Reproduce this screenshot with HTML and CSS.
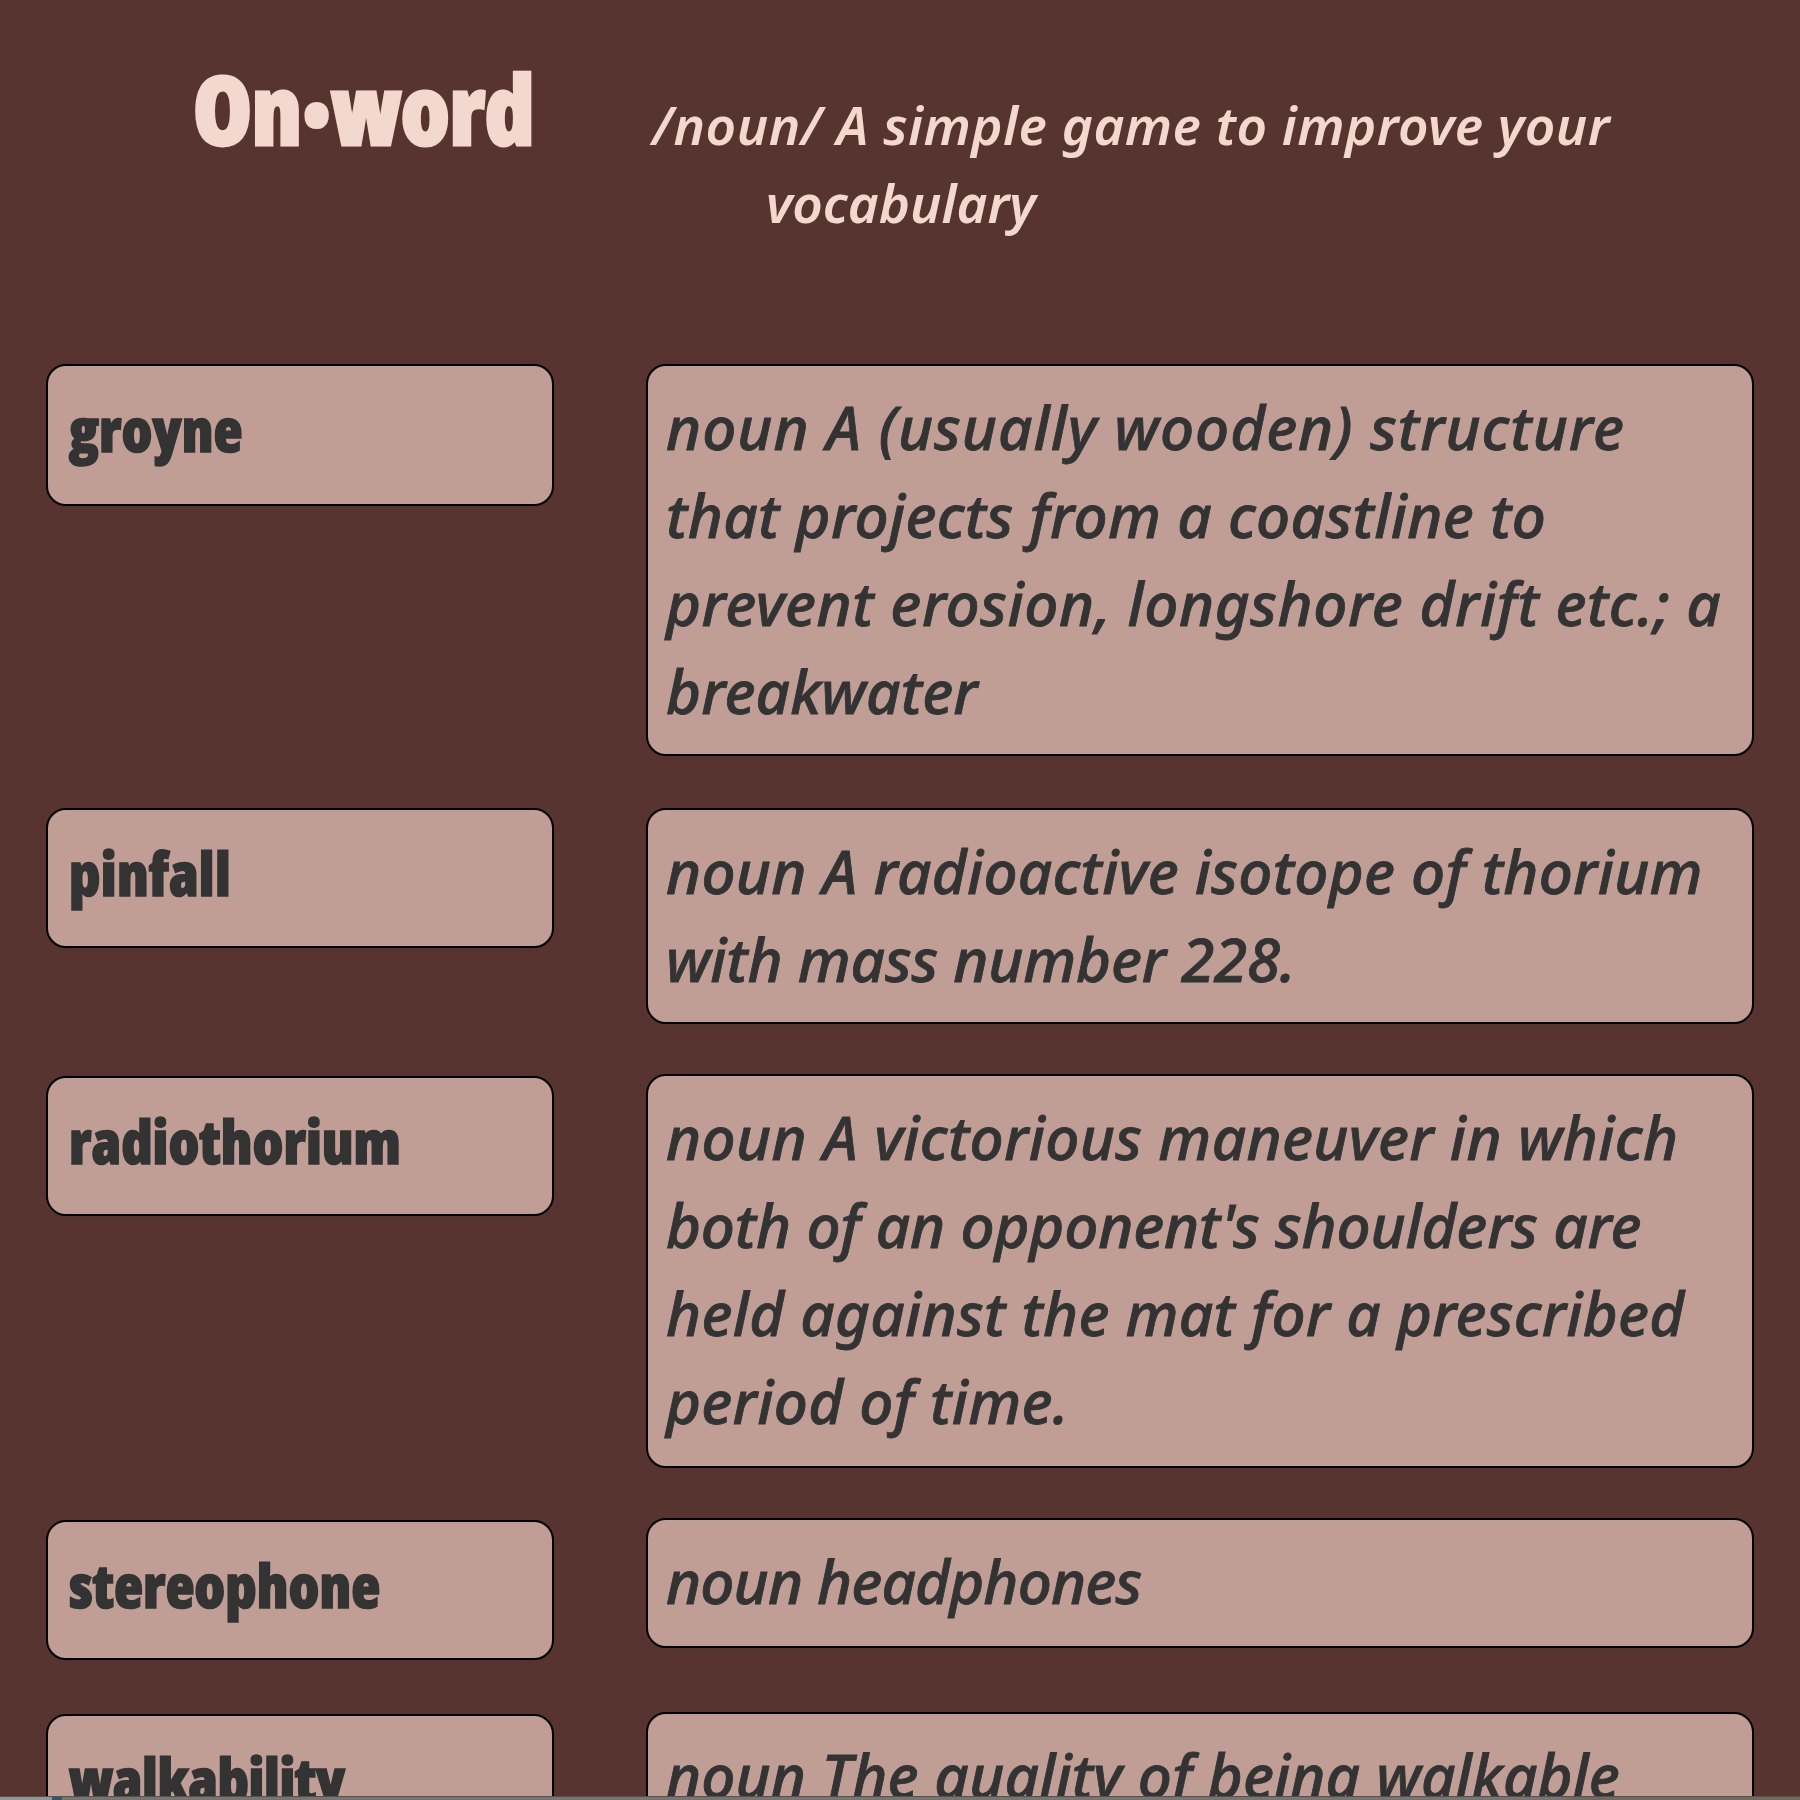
FILE: index.html
```html
<!DOCTYPE html>
<html lang="en">
<head>
<meta charset="utf-8">
<title>On•word</title>
<link rel="stylesheet" href="styles.css">
</head>
<body>
<div class="window">
  <header class="header">
    <h1 class="brand">On<span class="dot">•</span>word</h1>
    <p class="tagline"><span class="line" style="--track:.48px">/noun/ A simple game to improve your</span><span class="line line-end">vocabulary</span></p>
  </header>
  <main class="board">
    <section class="row first">
      <div class="word"><span>groyne</span></div>
      <div class="definition">
        <span class="line" style="--track:1px">noun A (usually wooden) structure</span>
        <span class="line" style="--track:.35px">that projects from a coastline to</span>
        <span class="line" style="--track:.58px">prevent erosion, longshore drift etc.; a</span>
        <span class="line" style="--track:.15px">breakwater</span>
      </div>
    </section>
    <section class="row">
      <div class="word"><span style="--track:.3px">pinfall</span></div>
      <div class="definition">
        <span class="line" style="--track:.27px">noun A radioactive isotope of thorium</span>
        <span class="line" style="--track:-.2px">with mass number 228.</span>
      </div>
    </section>
    <section class="row lowered">
      <div class="word"><span>radiothorium</span></div>
      <div class="definition">
        <span class="line" style="--track:.35px">noun A victorious maneuver in which</span>
        <span class="line" style="--track:-.17px">both of an opponent's shoulders are</span>
        <span class="line" style="--track:.27px">held against the mat for a prescribed</span>
        <span class="line" style="--track:.3px">period of time.</span>
      </div>
    </section>
    <section class="row lowered">
      <div class="word"><span>stereophone</span></div>
      <div class="definition">
        <span class="line" style="--track:-.85px">noun headphones</span>
      </div>
    </section>
    <section class="row lowered">
      <div class="word"><span style="--track:-.4px">walkability</span></div>
      <div class="definition">
        <span class="line" style="--track:.08px">noun The quality of being walkable</span>
      </div>
    </section>
  </main>
</div>
<footer class="edge"></footer>
</body>
</html>
```
FILE: styles.css
```css
* { box-sizing: border-box; }

body {
  margin: 0;
  height: 1800px;
  overflow: hidden;
  display: flex;
  flex-direction: column;
  background: #583431;
  font-family: "Noto Sans", sans-serif;
}

.window {
  flex: none;
  height: 1796px;
  overflow: hidden;
}

.header {
  height: 364px;
  padding: 38px 46px 0 193px;
  display: flex;
  align-items: baseline;
  color: #f3d8cf;
}

.brand {
  flex: none;
  width: 459px;
  margin: 0;
  font: 900 95px/140px "Open Sans", sans-serif;
  font-stretch: 75%;
  letter-spacing: -.3px;
  -webkit-text-stroke: 3px currentColor;
}

.dot {
  font-size: 76px;
  line-height: 1;
  vertical-align: 2px;
  -webkit-text-stroke: 0;
}

.tagline {
  margin: 0;
  font-size: 53px;
  font-style: italic;
  font-weight: 600;
  line-height: 78px;
}

.line {
  display: block;
  white-space: nowrap;
  letter-spacing: var(--track, 0);
}

.line-end { padding-left: 114px; }

.board {
  padding: 0 46px;
}

.row {
  display: flex;
  align-items: flex-start;
  gap: 92px;
  margin-bottom: 50px;
}

.word,
.definition {
  border: 2px solid #000;
  border-radius: 20px;
  background: #c09e95;
  color: #333;
}

.word {
  flex: none;
  width: 508px;
  height: 140px;
  padding: 19px 21px 0;
  font: 900 60px/88px "Open Sans", sans-serif;
  font-stretch: 75%;
  -webkit-text-stroke: 1.5px currentColor;
}

.word span { letter-spacing: var(--track, 0); }

.first { margin-bottom: 52px; }

.first .word { height: 142px; }

.lowered .word { margin-top: 2px; margin-bottom: 2px; }

.definition {
  flex: 1;
  padding: 17px 14px 19px 18px;
  font-size: 60px;
  font-style: italic;
  font-weight: 500;
  line-height: 88px;
  -webkit-text-stroke: .8px currentColor;
}

.lowered .definition { padding-top: 17px; padding-bottom: 21px; }

.edge {
  flex: none;
  height: 4px;
  border-top: 1px solid #565050;
  background: linear-gradient(90deg, #8f9794 0 52px, #2f5a6e 52px 62px, #777573 62px 1560px, #6f6a60 1572px);
}
```
